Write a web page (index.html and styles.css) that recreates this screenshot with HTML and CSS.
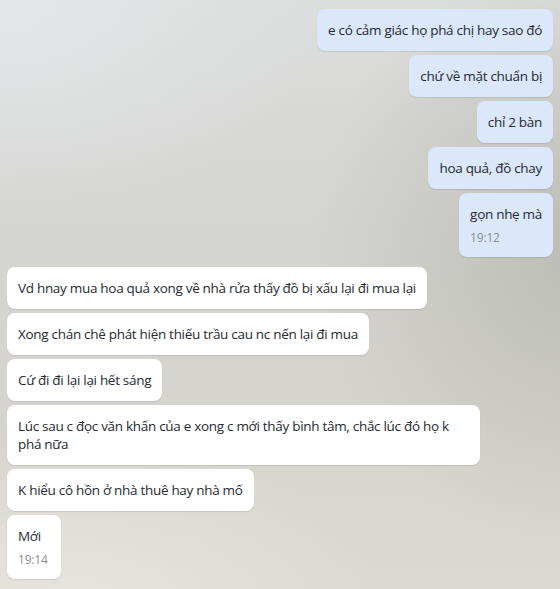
FILE: index.html
```html
<!DOCTYPE html>
<html lang="vi">
<head>
<meta charset="utf-8">
<link rel="stylesheet" href="styles.css">
</head>
<body>
<div class="chat">
  <div class="group out">
    <div class="bubble">e có cảm giác họ phá chị hay sao đó</div>
    <div class="bubble">chứ về mặt chuẩn bị</div>
    <div class="bubble">chỉ 2 bàn</div>
    <div class="bubble">hoa quả, đồ chay</div>
    <div class="bubble">gọn nhẹ mà<div class="time">19:12</div></div>
  </div>
  <div class="group in">
    <div class="bubble">Vd hnay mua hoa quả xong về nhà rửa thấy đồ bị xấu lại đi mua lại</div>
    <div class="bubble">Xong chán chê phát hiện thiếu trầu cau nc nến lại đi mua</div>
    <div class="bubble">Cứ đi đi lại lại hết sáng</div>
    <div class="bubble">Lúc sau c đọc văn khấn của e xong c mới thấy bình tâm, chắc lúc đó họ k phá nữa</div>
    <div class="bubble">K hiểu cô hồn ở nhà thuê hay nhà mố</div>
    <div class="bubble">Mới<div class="time">19:14</div></div>
  </div>
  <div class="group out">
    <div class="bubble next"></div>
  </div>
</div>
</body>
</html>
```

FILE: styles.css
```css
html, body {
  margin: 0;
  padding: 0;
  height: 589px;
  overflow: hidden;
}
body {
  font-family: "Open Sans", "Noto Sans", sans-serif;
  background:
    radial-gradient(ellipse 260px 300px at 575px 250px, rgba(188,188,182,0.95), rgba(188,188,182,0) 100%),
    radial-gradient(ellipse 320px 220px at 0px 0px, rgba(228,230,232,1), rgba(228,230,232,0) 100%),
    radial-gradient(ellipse 300px 160px at 80px 600px, rgba(230,228,222,1), rgba(230,228,222,0) 100%),
    linear-gradient(180deg, #dcdedd 0%, #d4d4d1 40%, #d6d4ce 70%, #dcd9d1 100%);
}
.chat {
  display: flex;
  flex-direction: column;
  gap: 10px;
  padding: 9px 7px 0 7px;
}
.group {
  display: flex;
  flex-direction: column;
  gap: 4px;
}
.group.out { align-items: flex-end; }
.group.in { align-items: flex-start; }
.bubble {
  box-sizing: border-box;
  max-width: 473px;
  min-width: 54px;
  padding: 12px 11px;
  border-radius: 8px;
  font-size: 13.5px;
  line-height: 18px;
  letter-spacing: -0.3px;
  color: #262a30;
  box-shadow: 0 1px 1px rgba(0,0,0,0.10);
}
.out .bubble { background: #dbe7fb; }
.in .bubble { background: #ffffff; }
.bubble.next { width: 276px; height: 42px; }
.time {
  margin-top: 7px;
  font-size: 12px;
  line-height: 15px;
  letter-spacing: -0.2px;
  color: #8b8f95;
}
```
